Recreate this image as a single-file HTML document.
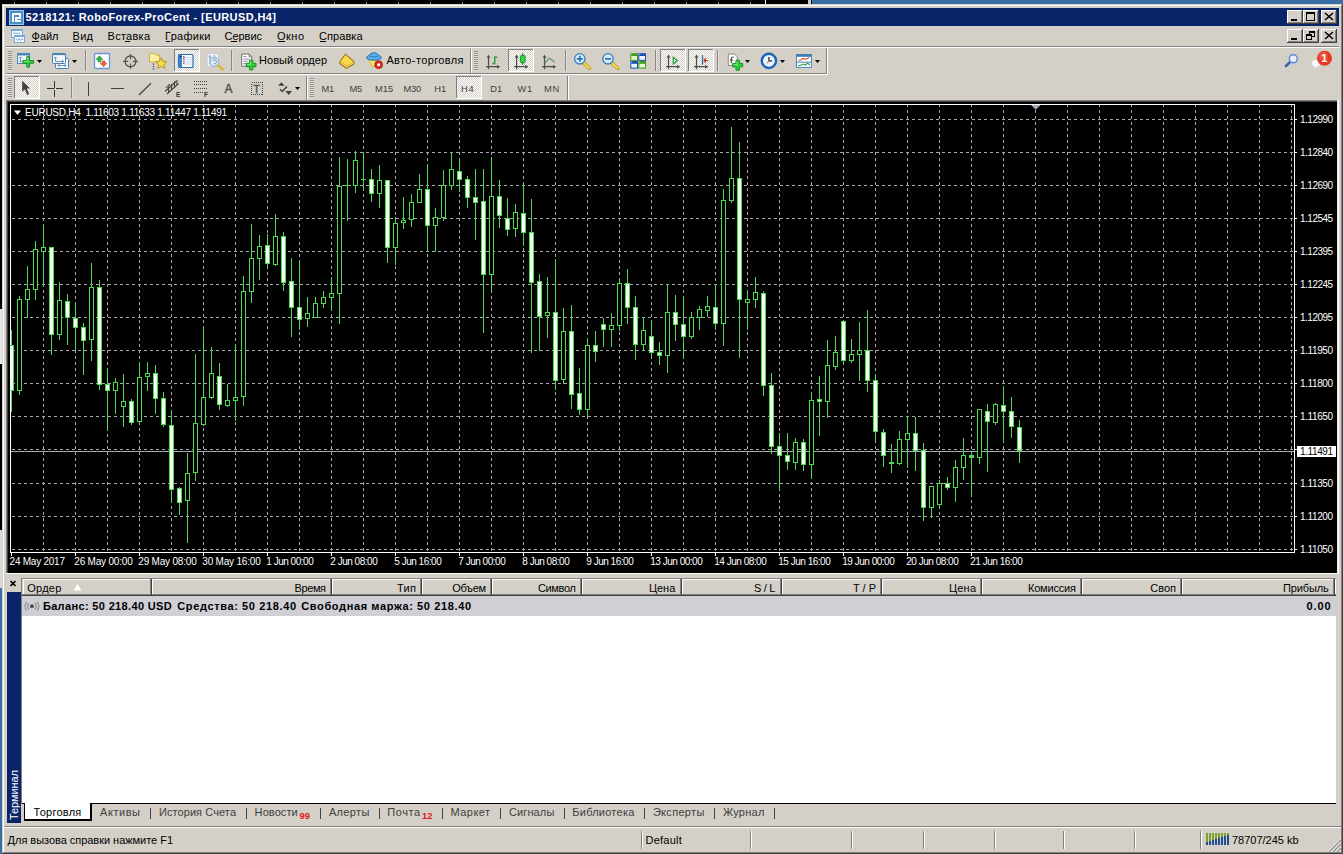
<!DOCTYPE html>
<html><head><meta charset="utf-8"><title>5218121: RoboForex-ProCent - [EURUSD,H4]</title>
<style>
html,body{margin:0;padding:0;background:#000;overflow:hidden}
svg{display:block;font-family:"Liberation Sans",sans-serif}
.c{shape-rendering:crispEdges}
</style></head><body>
<svg width="1343" height="854" viewBox="0 0 1343 854">
<defs>
<pattern id="chk" width="2" height="2" patternUnits="userSpaceOnUse"><rect width="2" height="2" fill="#ffffff"/><rect width="1" height="1" fill="#d4d0c8"/><rect x="1" y="1" width="1" height="1" fill="#d4d0c8"/></pattern>
</defs>
<g class="c">
<rect x="0" y="0" width="1343" height="854" fill="#000"/>
<rect x="812" y="0" width="531" height="4" fill="#3a6ea5"/>
<rect x="808" y="0" width="3" height="4" fill="#c8c8c8"/>
<rect x="14" y="2" width="1" height="2" fill="#8f8f8f"/>
<rect x="46" y="2" width="1" height="2" fill="#8f8f8f"/>
<rect x="78" y="2" width="1" height="2" fill="#8f8f8f"/>
<rect x="110" y="2" width="1" height="2" fill="#8f8f8f"/>
<rect x="142" y="2" width="1" height="2" fill="#8f8f8f"/>
<rect x="174" y="2" width="1" height="2" fill="#8f8f8f"/>
<rect x="206" y="2" width="1" height="2" fill="#8f8f8f"/>
<rect x="238" y="2" width="1" height="2" fill="#8f8f8f"/>
<rect x="270" y="2" width="1" height="2" fill="#8f8f8f"/>
<rect x="302" y="2" width="1" height="2" fill="#8f8f8f"/>
<rect x="334" y="2" width="1" height="2" fill="#8f8f8f"/>
<rect x="366" y="2" width="1" height="2" fill="#8f8f8f"/>
<rect x="398" y="2" width="1" height="2" fill="#8f8f8f"/>
<rect x="430" y="2" width="1" height="2" fill="#8f8f8f"/>
<rect x="462" y="2" width="1" height="2" fill="#8f8f8f"/>
<rect x="494" y="2" width="1" height="2" fill="#8f8f8f"/>
<rect x="526" y="2" width="1" height="2" fill="#8f8f8f"/>
<rect x="558" y="2" width="1" height="2" fill="#8f8f8f"/>
<rect x="590" y="2" width="1" height="2" fill="#8f8f8f"/>
<rect x="622" y="2" width="1" height="2" fill="#8f8f8f"/>
<rect x="654" y="2" width="1" height="2" fill="#8f8f8f"/>
<rect x="686" y="2" width="1" height="2" fill="#8f8f8f"/>
<rect x="718" y="2" width="1" height="2" fill="#8f8f8f"/>
<rect x="750" y="2" width="1" height="2" fill="#8f8f8f"/>
<rect x="765" y="0" width="1" height="4" fill="#fff"/>
<rect x="0" y="588" width="2" height="266" fill="#3a6ea5"/>
<rect x="0" y="309" width="2" height="55" fill="#e8e8e8"/>
<rect x="0" y="530" width="2" height="58" fill="#d8d8d8"/>
<rect x="2" y="4" width="1341" height="850" fill="#d4d0c8"/>
<rect x="2" y="5" width="1341" height="1" fill="#ffffff"/>
<rect x="3" y="5" width="1" height="848" fill="#ffffff"/>
<rect x="1341" y="5" width="1" height="848" fill="#808080"/>
<rect x="1342" y="4" width="1" height="850" fill="#404040"/>
<rect x="3" y="852" width="1339" height="1" fill="#808080"/>
<rect x="2" y="853" width="1341" height="1" fill="#404040"/>
<rect x="6" y="8" width="1333" height="18" fill="#0a246a"/>
</g>
<g class="c">
<rect x="9" y="10" width="15" height="15" fill="#9cc7e6"/>
<rect x="10" y="11" width="13" height="13" fill="#4d8fc4"/>
<rect x="12" y="13" width="9" height="2" fill="#fff"/>
<rect x="12" y="13" width="2" height="9" fill="#fff"/>
<rect x="19" y="13" width="2" height="5" fill="#fff"/>
<rect x="15" y="17" width="6" height="2" fill="#fff"/>
<rect x="15" y="20" width="6" height="2" fill="#fff"/>
<rect x="15" y="17" width="2" height="5" fill="#fff"/>
</g>
<text x="25.6" y="21" font-size="11" fill="#fff" font-weight="bold" textLength="250.4" lengthAdjust="spacing">5218121: RoboForex-ProCent - [EURUSD,H4]</text>
<g class="c">
<rect x="1287" y="10" width="16" height="14" fill="#d4d0c8"/>
<rect x="1287" y="10" width="15" height="1" fill="#ffffff"/>
<rect x="1287" y="10" width="1" height="13" fill="#ffffff"/>
<rect x="1287" y="23" width="16" height="1" fill="#404040"/>
<rect x="1302" y="10" width="1" height="14" fill="#404040"/>
<rect x="1288" y="22" width="14" height="1" fill="#808080"/>
<rect x="1301" y="11" width="1" height="12" fill="#808080"/>
<rect x="1287" y="29" width="16" height="14" fill="#d4d0c8"/>
<rect x="1287" y="29" width="15" height="1" fill="#ffffff"/>
<rect x="1287" y="29" width="1" height="13" fill="#ffffff"/>
<rect x="1287" y="42" width="16" height="1" fill="#404040"/>
<rect x="1302" y="29" width="1" height="14" fill="#404040"/>
<rect x="1288" y="41" width="14" height="1" fill="#808080"/>
<rect x="1301" y="30" width="1" height="12" fill="#808080"/>
<rect x="1303" y="10" width="16" height="14" fill="#d4d0c8"/>
<rect x="1303" y="10" width="15" height="1" fill="#ffffff"/>
<rect x="1303" y="10" width="1" height="13" fill="#ffffff"/>
<rect x="1303" y="23" width="16" height="1" fill="#404040"/>
<rect x="1318" y="10" width="1" height="14" fill="#404040"/>
<rect x="1304" y="22" width="14" height="1" fill="#808080"/>
<rect x="1317" y="11" width="1" height="12" fill="#808080"/>
<rect x="1303" y="29" width="16" height="14" fill="#d4d0c8"/>
<rect x="1303" y="29" width="15" height="1" fill="#ffffff"/>
<rect x="1303" y="29" width="1" height="13" fill="#ffffff"/>
<rect x="1303" y="42" width="16" height="1" fill="#404040"/>
<rect x="1318" y="29" width="1" height="14" fill="#404040"/>
<rect x="1304" y="41" width="14" height="1" fill="#808080"/>
<rect x="1317" y="30" width="1" height="12" fill="#808080"/>
<rect x="1321" y="10" width="16" height="14" fill="#d4d0c8"/>
<rect x="1321" y="10" width="15" height="1" fill="#ffffff"/>
<rect x="1321" y="10" width="1" height="13" fill="#ffffff"/>
<rect x="1321" y="23" width="16" height="1" fill="#404040"/>
<rect x="1336" y="10" width="1" height="14" fill="#404040"/>
<rect x="1322" y="22" width="14" height="1" fill="#808080"/>
<rect x="1335" y="11" width="1" height="12" fill="#808080"/>
<rect x="1321" y="29" width="16" height="14" fill="#d4d0c8"/>
<rect x="1321" y="29" width="15" height="1" fill="#ffffff"/>
<rect x="1321" y="29" width="1" height="13" fill="#ffffff"/>
<rect x="1321" y="42" width="16" height="1" fill="#404040"/>
<rect x="1336" y="29" width="1" height="14" fill="#404040"/>
<rect x="1322" y="41" width="14" height="1" fill="#808080"/>
<rect x="1335" y="30" width="1" height="12" fill="#808080"/>
<rect x="1291" y="19" width="6" height="2" fill="#000"/>
<rect x="1291" y="38" width="6" height="2" fill="#000"/>
<rect x="1306" y="12" width="9" height="9" fill="#000"/>
<rect x="1307" y="14" width="7" height="6" fill="#d4d0c8"/>
<rect x="1309" y="31" width="6" height="6" fill="#000"/>
<rect x="1310" y="33" width="4" height="3" fill="#d4d0c8"/>
<rect x="1306" y="34" width="6" height="6" fill="#000"/>
<rect x="1307" y="36" width="4" height="3" fill="#d4d0c8"/>
</g>
<path d="M1325 13l8 7M1333 13l-8 7" stroke="#000" stroke-width="1.6" fill="none"/>
<path d="M1325 32l8 7M1333 32l-8 7" stroke="#000" stroke-width="1.6" fill="none"/>
<g class="c">
<rect x="11" y="29" width="12" height="9" fill="#7aa7d6"/>
<rect x="12" y="31" width="10" height="6" fill="#f4f9fe"/>
<rect x="14" y="35" width="11" height="8" fill="#7aa7d6"/>
<rect x="15" y="37" width="9" height="5" fill="#f8fbff"/>
</g><path d="M13 34l1.500-1.500 1.500 1.500 1.500-1.500 1.500 1.500 1.500-1.500M16 38.500l1.500 2 1.500-2 1.500 2 1.500-2 1 1.500" stroke="#5b8fd0" stroke-width=".8" fill="none"/><g class="c">
<rect x="6" y="46" width="1333" height="1" fill="#808080"/>
<rect x="6" y="47" width="1333" height="1" fill="#ffffff"/>
</g>
<text x="31.6" y="40" font-size="11" fill="#000" textLength="26.9" lengthAdjust="spacing">Файл</text>
<text x="72.6" y="40" font-size="11" fill="#000" textLength="20.4" lengthAdjust="spacing">Вид</text>
<text x="107.6" y="40" font-size="11" fill="#000" textLength="42.4" lengthAdjust="spacing">Вставка</text>
<text x="165.1" y="40" font-size="11" fill="#000" textLength="45.4" lengthAdjust="spacing">Графики</text>
<text x="224.6" y="40" font-size="11" fill="#000" textLength="37.4" lengthAdjust="spacing">Сервис</text>
<text x="277.1" y="40" font-size="11" fill="#000" textLength="26.9" lengthAdjust="spacing">Окно</text>
<text x="319.1" y="40" font-size="11" fill="#000" textLength="43.4" lengthAdjust="spacing">Справка</text>
<g class="c">
<rect x="32" y="41" width="7" height="1" fill="#000"/>
<rect x="73" y="41" width="6" height="1" fill="#000"/>
<rect x="125" y="41" width="5" height="1" fill="#000"/>
<rect x="165.5" y="41" width="4.5" height="1" fill="#000"/>
<rect x="231" y="41" width="6" height="1" fill="#000"/>
<rect x="277.5" y="41" width="7.5" height="1" fill="#000"/>
<rect x="319.5" y="41" width="6.5" height="1" fill="#000"/>
</g>
<g class="c">
<rect x="6" y="73" width="822" height="1" fill="#808080"/>
<rect x="6" y="74" width="822" height="1" fill="#ffffff"/>
<rect x="826" y="48" width="1" height="26" fill="#808080"/>
<rect x="827" y="48" width="1" height="27" fill="#ffffff"/>
<rect x="306" y="76" width="1" height="24" fill="#808080"/>
<rect x="307" y="76" width="1" height="24" fill="#ffffff"/>
<rect x="567" y="76" width="1" height="24" fill="#808080"/>
<rect x="568" y="76" width="1" height="24" fill="#ffffff"/>
<rect x="470" y="49" width="1" height="24" fill="#808080"/>
<rect x="471" y="49" width="1" height="24" fill="#ffffff"/>
<rect x="8" y="51" width="4" height="1" fill="#908d86"/>
<rect x="8" y="52" width="4" height="1" fill="#e4e1da"/>
<rect x="8" y="53" width="4" height="1" fill="#908d86"/>
<rect x="8" y="54" width="4" height="1" fill="#e4e1da"/>
<rect x="8" y="55" width="4" height="1" fill="#908d86"/>
<rect x="8" y="56" width="4" height="1" fill="#e4e1da"/>
<rect x="8" y="57" width="4" height="1" fill="#908d86"/>
<rect x="8" y="58" width="4" height="1" fill="#e4e1da"/>
<rect x="8" y="59" width="4" height="1" fill="#908d86"/>
<rect x="8" y="60" width="4" height="1" fill="#e4e1da"/>
<rect x="8" y="61" width="4" height="1" fill="#908d86"/>
<rect x="8" y="62" width="4" height="1" fill="#e4e1da"/>
<rect x="8" y="63" width="4" height="1" fill="#908d86"/>
<rect x="8" y="64" width="4" height="1" fill="#e4e1da"/>
<rect x="8" y="65" width="4" height="1" fill="#908d86"/>
<rect x="8" y="66" width="4" height="1" fill="#e4e1da"/>
<rect x="8" y="67" width="4" height="1" fill="#908d86"/>
<rect x="8" y="68" width="4" height="1" fill="#e4e1da"/>
<rect x="8" y="69" width="4" height="1" fill="#908d86"/>
<rect x="8" y="70" width="4" height="1" fill="#e4e1da"/>
<rect x="474" y="51" width="4" height="1" fill="#908d86"/>
<rect x="474" y="52" width="4" height="1" fill="#e4e1da"/>
<rect x="474" y="53" width="4" height="1" fill="#908d86"/>
<rect x="474" y="54" width="4" height="1" fill="#e4e1da"/>
<rect x="474" y="55" width="4" height="1" fill="#908d86"/>
<rect x="474" y="56" width="4" height="1" fill="#e4e1da"/>
<rect x="474" y="57" width="4" height="1" fill="#908d86"/>
<rect x="474" y="58" width="4" height="1" fill="#e4e1da"/>
<rect x="474" y="59" width="4" height="1" fill="#908d86"/>
<rect x="474" y="60" width="4" height="1" fill="#e4e1da"/>
<rect x="474" y="61" width="4" height="1" fill="#908d86"/>
<rect x="474" y="62" width="4" height="1" fill="#e4e1da"/>
<rect x="474" y="63" width="4" height="1" fill="#908d86"/>
<rect x="474" y="64" width="4" height="1" fill="#e4e1da"/>
<rect x="474" y="65" width="4" height="1" fill="#908d86"/>
<rect x="474" y="66" width="4" height="1" fill="#e4e1da"/>
<rect x="474" y="67" width="4" height="1" fill="#908d86"/>
<rect x="474" y="68" width="4" height="1" fill="#e4e1da"/>
<rect x="474" y="69" width="4" height="1" fill="#908d86"/>
<rect x="474" y="70" width="4" height="1" fill="#e4e1da"/>
<rect x="8" y="78" width="4" height="1" fill="#908d86"/>
<rect x="8" y="79" width="4" height="1" fill="#e4e1da"/>
<rect x="8" y="80" width="4" height="1" fill="#908d86"/>
<rect x="8" y="81" width="4" height="1" fill="#e4e1da"/>
<rect x="8" y="82" width="4" height="1" fill="#908d86"/>
<rect x="8" y="83" width="4" height="1" fill="#e4e1da"/>
<rect x="8" y="84" width="4" height="1" fill="#908d86"/>
<rect x="8" y="85" width="4" height="1" fill="#e4e1da"/>
<rect x="8" y="86" width="4" height="1" fill="#908d86"/>
<rect x="8" y="87" width="4" height="1" fill="#e4e1da"/>
<rect x="8" y="88" width="4" height="1" fill="#908d86"/>
<rect x="8" y="89" width="4" height="1" fill="#e4e1da"/>
<rect x="8" y="90" width="4" height="1" fill="#908d86"/>
<rect x="8" y="91" width="4" height="1" fill="#e4e1da"/>
<rect x="8" y="92" width="4" height="1" fill="#908d86"/>
<rect x="8" y="93" width="4" height="1" fill="#e4e1da"/>
<rect x="8" y="94" width="4" height="1" fill="#908d86"/>
<rect x="8" y="95" width="4" height="1" fill="#e4e1da"/>
<rect x="8" y="96" width="4" height="1" fill="#908d86"/>
<rect x="8" y="97" width="4" height="1" fill="#e4e1da"/>
<rect x="310" y="78" width="4" height="1" fill="#908d86"/>
<rect x="310" y="79" width="4" height="1" fill="#e4e1da"/>
<rect x="310" y="80" width="4" height="1" fill="#908d86"/>
<rect x="310" y="81" width="4" height="1" fill="#e4e1da"/>
<rect x="310" y="82" width="4" height="1" fill="#908d86"/>
<rect x="310" y="83" width="4" height="1" fill="#e4e1da"/>
<rect x="310" y="84" width="4" height="1" fill="#908d86"/>
<rect x="310" y="85" width="4" height="1" fill="#e4e1da"/>
<rect x="310" y="86" width="4" height="1" fill="#908d86"/>
<rect x="310" y="87" width="4" height="1" fill="#e4e1da"/>
<rect x="310" y="88" width="4" height="1" fill="#908d86"/>
<rect x="310" y="89" width="4" height="1" fill="#e4e1da"/>
<rect x="310" y="90" width="4" height="1" fill="#908d86"/>
<rect x="310" y="91" width="4" height="1" fill="#e4e1da"/>
<rect x="310" y="92" width="4" height="1" fill="#908d86"/>
<rect x="310" y="93" width="4" height="1" fill="#e4e1da"/>
<rect x="310" y="94" width="4" height="1" fill="#908d86"/>
<rect x="310" y="95" width="4" height="1" fill="#e4e1da"/>
<rect x="310" y="96" width="4" height="1" fill="#908d86"/>
<rect x="310" y="97" width="4" height="1" fill="#e4e1da"/>
<rect x="85" y="50" width="1" height="21" fill="#8a8782"/>
<rect x="86" y="50" width="1" height="21" fill="#e2dfd8"/>
<rect x="231" y="50" width="1" height="21" fill="#8a8782"/>
<rect x="232" y="50" width="1" height="21" fill="#e2dfd8"/>
<rect x="565" y="50" width="1" height="21" fill="#8a8782"/>
<rect x="566" y="50" width="1" height="21" fill="#e2dfd8"/>
<rect x="655" y="50" width="1" height="21" fill="#8a8782"/>
<rect x="656" y="50" width="1" height="21" fill="#e2dfd8"/>
<rect x="717" y="50" width="1" height="21" fill="#8a8782"/>
<rect x="718" y="50" width="1" height="21" fill="#e2dfd8"/>
<rect x="71" y="77" width="1" height="21" fill="#8a8782"/>
<rect x="72" y="77" width="1" height="21" fill="#e2dfd8"/>
<rect x="174" y="49" width="26" height="23" fill="url(#chk)"/>
<rect x="174" y="49" width="26" height="1" fill="#808080"/>
<rect x="174" y="49" width="1" height="23" fill="#808080"/>
<rect x="174" y="71" width="26" height="1" fill="#ffffff"/>
<rect x="199" y="49" width="1" height="23" fill="#ffffff"/>
<rect x="508" y="49" width="26" height="23" fill="url(#chk)"/>
<rect x="508" y="49" width="26" height="1" fill="#808080"/>
<rect x="508" y="49" width="1" height="23" fill="#808080"/>
<rect x="508" y="71" width="26" height="1" fill="#ffffff"/>
<rect x="533" y="49" width="1" height="23" fill="#ffffff"/>
<rect x="660" y="49" width="26" height="23" fill="url(#chk)"/>
<rect x="660" y="49" width="26" height="1" fill="#808080"/>
<rect x="660" y="49" width="1" height="23" fill="#808080"/>
<rect x="660" y="71" width="26" height="1" fill="#ffffff"/>
<rect x="685" y="49" width="1" height="23" fill="#ffffff"/>
<rect x="688" y="49" width="26" height="23" fill="url(#chk)"/>
<rect x="688" y="49" width="26" height="1" fill="#808080"/>
<rect x="688" y="49" width="1" height="23" fill="#808080"/>
<rect x="688" y="71" width="26" height="1" fill="#ffffff"/>
<rect x="713" y="49" width="1" height="23" fill="#ffffff"/>
<rect x="14" y="76" width="26" height="23" fill="url(#chk)"/>
<rect x="14" y="76" width="26" height="1" fill="#808080"/>
<rect x="14" y="76" width="1" height="23" fill="#808080"/>
<rect x="14" y="98" width="26" height="1" fill="#ffffff"/>
<rect x="39" y="76" width="1" height="23" fill="#ffffff"/>
<rect x="456" y="76" width="26" height="23" fill="url(#chk)"/>
<rect x="456" y="76" width="26" height="1" fill="#808080"/>
<rect x="456" y="76" width="1" height="23" fill="#808080"/>
<rect x="456" y="98" width="26" height="1" fill="#ffffff"/>
<rect x="481" y="76" width="1" height="23" fill="#ffffff"/>
</g>
<path d="M37 60h5l-2.5 3z" fill="#000"/>
<path d="M72 60h5l-2.5 3z" fill="#000"/>
<path d="M745 60h5l-2.5 3z" fill="#000"/>
<path d="M780 60h5l-2.5 3z" fill="#000"/>
<path d="M815 60h5l-2.5 3z" fill="#000"/>
<path d="M295 87h5l-2.5 3z" fill="#000"/>
<text x="259.1" y="64" font-size="11" fill="#000" textLength="67.9" lengthAdjust="spacing">Новый ордер</text>
<text x="386.4" y="64" font-size="11" fill="#000" textLength="77.1" lengthAdjust="spacing">Авто-торговля</text>
<text x="321.4" y="92" font-size="9.3" fill="#404040" textLength="12.8" lengthAdjust="spacing">M1</text>
<text x="349.6" y="92" font-size="9.3" fill="#404040" textLength="12.6" lengthAdjust="spacing">M5</text>
<text x="375.1" y="92" font-size="9.3" fill="#404040" textLength="18.1" lengthAdjust="spacing">M15</text>
<text x="403.4" y="92" font-size="9.3" fill="#404040" textLength="17.8" lengthAdjust="spacing">M30</text>
<text x="434.2" y="92" font-size="9.3" fill="#404040" textLength="12.0" lengthAdjust="spacing">H1</text>
<text x="461.1" y="92" font-size="9.3" fill="#404040" textLength="12.6" lengthAdjust="spacing">H4</text>
<text x="490.2" y="92" font-size="9.3" fill="#404040" textLength="12.0" lengthAdjust="spacing">D1</text>
<text x="517.6" y="92" font-size="9.3" fill="#404040" textLength="14.6" lengthAdjust="spacing">W1</text>
<text x="544.1" y="92" font-size="9.3" fill="#404040" textLength="15.1" lengthAdjust="spacing">MN</text>
<rect x="17.5" y="53.5" width="12" height="10" fill="#f2f8fd" stroke="#4a86b8"/>
<rect x="17.5" y="53.5" width="12" height="2" fill="#4a86b8"/>
<path d="M20.5 57v5M18.8 58.5l1.7-1.8 1.7 1.8M18.8 60.5l1.7 1.8 1.7-1.8" stroke="#7d9db8" stroke-width="1" fill="none"/>
<path d="M26.849999999999998 56.6h2.7v3.9499999999999997h3.9499999999999997v2.7h-3.9499999999999997v3.9499999999999997h-2.7v-3.9499999999999997h-3.9499999999999997v-2.7h3.9499999999999997z" fill="#2fd13c" stroke="#178f22" stroke-width="1"/>
<path d="M27.849999999999998 57.6v3.9499999999999997h-3.9499999999999997" stroke="#8df09a" stroke-width="1" fill="none" opacity=".8"/>
<rect x="55.5" y="58.5" width="13" height="10" rx="1" fill="#f2f8fd" stroke="#4a7fb0"/>
<path d="M58 65.5h8M58 65.5l1.5-1.5M58 65.5l1.5 1.5M66 65.5l-1.5-1.5M66 65.5l-1.5 1.5" stroke="#6f93b3" stroke-width="1" fill="none"/>
<rect x="52.5" y="53.5" width="13" height="10" rx="1" fill="#f2f8fd" stroke="#4a7fb0"/>
<rect x="52.5" y="53.5" width="13" height="1.6" fill="#4a7fb0"/>
<path d="M55.5 57v4.5h8M54 58.5l1.5-1.6 1.5 1.6M62 60l1.6 1.5-1.6 1.5" stroke="#6f93b3" stroke-width="1" fill="none"/>
<rect x="94.5" y="53.5" width="15" height="15" rx="1.2" fill="#fcfdff" stroke="#6b95d6" stroke-width="1.3"/>
<path d="M99.4 55.8l3.4 3.6h-2v2.4h-2.8v-2.4h-2z" fill="#2bb53a" stroke="#1c8a28" stroke-width=".6"/>
<path d="M103.6 66.8l-3.4-3.6h2v-2.2h2.8v2.2h2z" fill="#f0643c" stroke="#c8431f" stroke-width=".6"/>
<circle cx="130.5" cy="61.4" r="5.4" fill="none" stroke="#555" stroke-width="1.3"/>
<path d="M130.5 54v5.3M130.5 63.5v5.2M123 61.4h5.3M132.7 61.4h5.2" stroke="#555" stroke-width="1.2"/>
<path d="M149.5 55l1.2-1.7h3.6l1.2 1.7h4v7h-10z" fill="#fbf0a0" stroke="#cbb044" stroke-width="1"/>
<path d="M153.5 63.5v6" stroke="#333" stroke-width="1.2" stroke-dasharray="1.2 1.2"/>
<path d="M161.3 57.6l1.7 3.6 3.9.5-2.9 2.7.8 3.9-3.5-1.9-3.5 1.9.8-3.9-2.9-2.7 3.9-.5z" fill="#f8dc45" stroke="#b5942a" stroke-width="1"/>
<rect x="178.5" y="54.5" width="14.5" height="13" rx="1" fill="#f7fbff" stroke="#2d6db3" stroke-width="1.2"/>
<rect x="179" y="55" width="3" height="12" fill="#3c86d0"/>
<path d="M184 57.5h8M184 59.7h8M184 61.9h8M184 64.1h8" stroke="#b8cff0" stroke-width=".8"/>
<rect x="180" y="56" width="1.4" height="1.4" fill="#0a1a4a"/><rect x="183.2" y="56" width="1.2" height="1.2" fill="#222"/><rect x="183.2" y="58.2" width="1.2" height="1.2" fill="#222"/><rect x="183.2" y="60.4" width="1.2" height="1.2" fill="#a02020"/><rect x="183.2" y="62.6" width="1.2" height="1.2" fill="#a02020"/>
<rect x="207.2" y="53.8" width="11" height="12.3" fill="#f4f8fc" stroke="#c2ccd6" stroke-width=".8"/>
<path d="M210 55v9M208.5 57h3M214.5 55v6M213 58h3.5" stroke="#7f9fbd" stroke-width="1"/>
<path d="M217.5 65l5.2 4.3" stroke="#d9b92e" stroke-width="2.6" stroke-linecap="round"/>
<circle cx="214.3" cy="62" r="4.3" fill="#dcebf7" fill-opacity=".85" stroke="#8fb0cf" stroke-width="1.2"/>
<path d="M212.7 61a2 2 0 1 1 1.2 2.8" stroke="#6f96bd" stroke-width="1" fill="none"/>
<path d="M241.7 54h7.3l2.8 2.8v9.4h-10.1z" fill="#fbfbfb" stroke="#6d6d6d" stroke-width="1"/>
<path d="M249 54v2.8h2.8" fill="none" stroke="#6d6d6d" stroke-width=".8"/>
<path d="M243.5 56.5h3M243.5 59h6M243.5 61.3h4M243.5 63.6h3" stroke="#8a8a9a" stroke-width="1.1"/>
<path d="M249.54999999999998 60.2h3.3v3.15h3.15v3.3h-3.15v3.15h-3.3v-3.15h-3.15v-3.3h3.15z" fill="#2fd13c" stroke="#178f22" stroke-width="1"/>
<path d="M250.54999999999998 61.2v3.15h-3.15" stroke="#8df09a" stroke-width="1" fill="none" opacity=".8"/>
<path d="M345.4 54l9 7.900-.9 2.500-7 4-7-5 .6-2z" fill="#d9a31e" stroke="#94690f" stroke-width="1"/>
<path d="M345.500 55l7.700 6.900-6.500 3.600-5.800-4.100z" fill="#f8da48"/>
<path d="M340.300 62.300l6.300 4.500 7-4" stroke="#fbe98c" stroke-width=".9" fill="none"/>
<path d="M368.200 59.200l4.600 8.400 3.800-4 1-4.400z" fill="#f7e463" stroke="#c9ae38" stroke-width=".8"/>
<path d="M366.600 57.800c0-1.300 1.300-2.100 3-2.500.3-1.500 1.900-2.500 4.300-2.500s4 1 4.300 2.500c1.700.4 3 1.200 3 2.500 0 1.500-3.200 2.400-7.300 2.400s-7.300-.9-7.300-2.400z" fill="#58aff0" stroke="#236fa9" stroke-width="1"/>
<path d="M369.800 56.200c1.200.7 6.900.7 8.200 0" stroke="#236fa9" stroke-width=".8" fill="none"/>
<circle cx="378.600" cy="64.700" r="3.900" fill="#d92b20" stroke="#a81410" stroke-width=".8"/>
<rect x="377.300" y="63.400" width="2.700" height="2.700" fill="#fff"/>
<path d="M488.5 69.2V55.7M486.0 66.7H499.5" stroke="#4c4c4c" stroke-width="1.2" fill="none"/>
<path d="M486.5 57.7l2-3 2 3zM497.0 64.7l3 2-3 2z" fill="#4c4c4c"/>
<path d="M494.7 56.2v8.4M494.7 57.3h2.600M494.700 63.400h-2.400" stroke="#2f9e3f" stroke-width="1.5" fill="none"/>
<path d="M516.6 69.2V55.7M514.1 66.7H527.6" stroke="#4c4c4c" stroke-width="1.2" fill="none"/>
<path d="M514.6 57.7l2-3 2 3zM525.1 64.7l3 2-3 2z" fill="#4c4c4c"/>
<path d="M522.7 53.2v11.500" stroke="#1d8a2a" stroke-width="1.300"/>
<rect x="520.4" y="55.600" width="4.700" height="7" rx=".8" fill="#35d948" stroke="#1d8a2a" stroke-width="1"/>
<path d="M544.5 69.2V55.7M542.0 66.7H555.5" stroke="#4c4c4c" stroke-width="1.2" fill="none"/>
<path d="M542.5 57.7l2-3 2 3zM553.0 64.7l3 2-3 2z" fill="#4c4c4c"/>
<path d="M544.800 63.200l4.400-5 5.600 3.900" stroke="#6f9a78" stroke-width="1.300" fill="none"/>
<path d="M583.5999999999999 62.800l6 5.500" stroke="#b8951f" stroke-width="3.400" stroke-linecap="round"/>
<path d="M583.8 63l5.600 5.100" stroke="#f6dc3c" stroke-width="2" stroke-linecap="round"/>
<circle cx="579.8" cy="58.800" r="5.200" fill="#d5ecfb" stroke="#3b7cbd" stroke-width="1.300"/>
<path d="M576.8 58.800h6M579.8 55.800v6" stroke="#2e6fb0" stroke-width="1.700"/>
<path d="M611.8 62.800l6 5.500" stroke="#b8951f" stroke-width="3.400" stroke-linecap="round"/>
<path d="M612 63l5.600 5.100" stroke="#f6dc3c" stroke-width="2" stroke-linecap="round"/>
<circle cx="608" cy="58.800" r="5.200" fill="#d5ecfb" stroke="#3b7cbd" stroke-width="1.300"/>
<path d="M605 58.800h6" stroke="#2e6fb0" stroke-width="1.700"/>
<rect x="630.3" y="53.2" width="7.700" height="7.600" fill="#3f9a1e"/>
<rect x="631.3" y="56.0" width="5.700" height="3.800" fill="#e7f6c8"/>
<rect x="631.0999999999999" y="54.0" width="1" height="1" fill="#fff" opacity=".8"/>
<rect x="638.3" y="53.2" width="7.700" height="7.600" fill="#1f4fb0"/>
<rect x="639.3" y="56.0" width="5.700" height="3.800" fill="#eef3ff"/>
<rect x="639.0999999999999" y="54.0" width="1" height="1" fill="#fff" opacity=".8"/>
<rect x="630.3" y="61" width="7.700" height="7.600" fill="#1f4fb0"/>
<rect x="631.3" y="63.8" width="5.700" height="3.800" fill="#eef3ff"/>
<rect x="631.0999999999999" y="61.8" width="1" height="1" fill="#fff" opacity=".8"/>
<rect x="638.3" y="61" width="7.700" height="7.600" fill="#3f9a1e"/>
<rect x="639.3" y="63.8" width="5.700" height="3.800" fill="#e7f6c8"/>
<rect x="639.0999999999999" y="61.8" width="1" height="1" fill="#fff" opacity=".8"/>
<path d="M668.5 69.2V55.7M666.0 66.7H679.5" stroke="#4c4c4c" stroke-width="1.2" fill="none"/>
<path d="M666.5 57.7l2-3 2 3zM677.0 64.7l3 2-3 2z" fill="#4c4c4c"/>
<path d="M673.300 57.300v6.500l4-3.250z" fill="none" stroke="#2e9e3e" stroke-width="1.300"/>
<path d="M696.5 69.2V55.7M694.0 66.7H707.5" stroke="#4c4c4c" stroke-width="1.2" fill="none"/>
<path d="M694.5 57.7l2-3 2 3zM705.0 64.7l3 2-3 2z" fill="#4c4c4c"/>
<path d="M702.500 55.200v9.500" stroke="#2f6f9f" stroke-width="1.300"/>
<path d="M703.800 60.500h4M703.800 60.500l2.200-2.200M703.800 60.500l2.200 2.200" stroke="#b83a1a" stroke-width="1.200" fill="none"/>
<path d="M728.300 54h6.200l2.800 2.800v8.700h-9z" fill="#fbfbfb" stroke="#8a8a8a" stroke-width="1"/>
<path d="M733.500 57.200c-1.500-.3-2.200.3-2.200 1.600v4.500M730 60h3" stroke="#444" stroke-width="1.100" fill="none"/>
<path d="M736.0500000000001 60.2h3.3v3.35h3.35v3.3h-3.35v3.35h-3.3v-3.35h-3.35v-3.3h3.35z" fill="#2fd13c" stroke="#178f22" stroke-width="1"/>
<path d="M737.0500000000001 61.2v3.35h-3.35" stroke="#8df09a" stroke-width="1" fill="none" opacity=".8"/>
<circle cx="768.900" cy="60.800" r="7" fill="#eaf4ff" stroke="#1d6bc4" stroke-width="2.200"/>
<circle cx="768.900" cy="60.800" r="7.900" fill="none" stroke="#0f4a94" stroke-width=".6"/>
<path d="M768.900 60.800v-3.800M768.900 60.800h3.200" stroke="#222" stroke-width="1.200"/>
<path d="M768.900 60.800l-1.800 2.600" stroke="#c0392b" stroke-width=".9"/>
<rect x="796.400" y="54.600" width="15" height="12.800" fill="#fdfeff" stroke="#4a86b8" stroke-width="1"/>
<rect x="796" y="54.200" width="15.800" height="2.600" fill="#3d7db3"/>
<path d="M796.500 62.200h15" stroke="#4a86b8" stroke-width="1"/>
<path d="M798.300 60.300l2.500-.3 2.200-1.600 2.800.8 3.600-1.600" stroke="#c0452a" stroke-width="1.100" fill="none"/>
<path d="M798.300 65.600l2.500-.3 2.200-1.300 2.400 1 2.200-1.900 2 1.900" stroke="#2f9e4f" stroke-width="1.100" fill="none"/>
<path d="M1286 66l4.200-4.200" stroke="#3a63b8" stroke-width="2.600" stroke-linecap="round"/>
<circle cx="1293.300" cy="58.800" r="4" fill="#e8f1fb" stroke="#5b8bd0" stroke-width="1.500"/>
<path d="M1311.500 63.500a4.500 3.800 0 1 1 6 3.300l-3.800 2.800.6-2.600a4.500 3.800 0 0 1-2.800-3.500z" fill="#fafafa" stroke="#c6c9cf" stroke-width=".8"/>
<circle cx="1324.500" cy="58.200" r="7.500" fill="#e53a24"/>
<circle cx="1323.500" cy="56.500" r="4.500" fill="#f2644a" opacity=".55"/>
<text x="1321.3" y="62.3" font-size="11" fill="#fff" font-weight="bold">1</text>
<path d="M22.200 80.800v11l2.700-2.500 2.300 5.600 1.900-.8-2.300-5.500h3.300z" fill="#404040"/>
<g class="c">
<rect x="47" y="88" width="7" height="1" fill="#333"/>
<rect x="56" y="88" width="7" height="1" fill="#333"/>
<rect x="54" y="81" width="1" height="7" fill="#333"/>
<rect x="54" y="90" width="1" height="7" fill="#333"/>
<rect x="54" y="88" width="1" height="1" fill="#777"/>
<rect x="88" y="82" width="1" height="14" fill="#404040"/>
<rect x="111" y="88" width="13" height="1" fill="#404040"/>
</g>
<path d="M139 95l12-11.800" stroke="#404040" stroke-width="1.200"/>
<path d="M165 91.500l11.500-10.500M167 94l11.500-10.500M166 87.800l4-3.600" stroke="#404040" stroke-width="1.100" fill="none"/>
<path d="M168.500 86.500v6M171.500 84v6M174.500 81.500v6M177 80v5" stroke="#404040" stroke-width="1"/>
<text x="176" y="96.8" font-size="6.5" fill="#333" font-weight="bold">E</text>
<path d="M194 81.500h13M194 84.500h13M194 88.500h13M194 92.500h9" stroke="#404040" stroke-width="1" stroke-dasharray="1 1" class="c"/>
<text x="204" y="96.8" font-size="6.5" fill="#333" font-weight="bold">F</text>
<text x="224.4" y="92.7" font-size="12" fill="#505050" textLength="9.0" lengthAdjust="spacing" stroke="#505050" stroke-width=".4">A</text>
<rect x="251.500" y="82.500" width="11" height="12" fill="none" stroke="#404040" stroke-width="1" stroke-dasharray="1 1" class="c"/>
<text x="253.3" y="92.7" font-size="11" fill="#505050" stroke="#505050" stroke-width=".4">T</text>
<path d="M281.400 82.200l3.300 3.600h-6.600zM288.700 95l3.300-4h-6.600z" fill="#404040"/>
<path d="M280 89.300l2.300 2.200 4.700-5" stroke="#404040" stroke-width="1.500" fill="none"/>
<g class="c">
<rect x="6" y="100" width="1333" height="473" fill="#000"/>
<rect x="6" y="100" width="1333" height="1" fill="#808080"/>
<rect x="6" y="100" width="1" height="473" fill="#808080"/>
<rect x="7" y="101" width="1331" height="1" fill="#404040"/>
<rect x="7" y="101" width="1" height="472" fill="#404040"/>
<rect x="1337" y="100" width="1" height="473" fill="#ebe9e4"/>
<rect x="1338" y="100" width="1" height="474" fill="#ffffff"/>
<rect x="6" y="573" width="1333" height="1" fill="#ffffff"/>
<g stroke="#a6a8ab" stroke-width="1" stroke-dasharray="3 3" fill="none">
<path d="M12 119.5H1294"/>
<path d="M12 152.5H1294"/>
<path d="M12 185.5H1294"/>
<path d="M12 218.5H1294"/>
<path d="M12 251.5H1294"/>
<path d="M12 284.5H1294"/>
<path d="M12 317.5H1294"/>
<path d="M12 350.5H1294"/>
<path d="M12 383.5H1294"/>
<path d="M12 416.5H1294"/>
<path d="M12 449.5H1294"/>
<path d="M12 483.5H1294"/>
<path d="M12 516.5H1294"/>
<path d="M12 549.5H1294"/>
<path d="M43.5 104V552"/>
<path d="M75.5 104V552"/>
<path d="M107.5 104V552"/>
<path d="M139.5 104V552"/>
<path d="M171.5 104V552"/>
<path d="M203.5 104V552"/>
<path d="M235.5 104V552"/>
<path d="M267.5 104V552"/>
<path d="M299.5 104V552"/>
<path d="M331.5 104V552"/>
<path d="M363.5 104V552"/>
<path d="M395.5 104V552"/>
<path d="M427.5 104V552"/>
<path d="M459.5 104V552"/>
<path d="M491.5 104V552"/>
<path d="M523.5 104V552"/>
<path d="M555.5 104V552"/>
<path d="M587.5 104V552"/>
<path d="M619.5 104V552"/>
<path d="M651.5 104V552"/>
<path d="M683.5 104V552"/>
<path d="M715.5 104V552"/>
<path d="M747.5 104V552"/>
<path d="M779.5 104V552"/>
<path d="M811.5 104V552"/>
<path d="M843.5 104V552"/>
<path d="M875.5 104V552"/>
<path d="M907.5 104V552"/>
<path d="M939.5 104V552"/>
<path d="M971.5 104V552"/>
<path d="M1003.5 104V552"/>
<path d="M1035.5 104V552"/>
<path d="M1067.5 104V552"/>
<path d="M1099.5 104V552"/>
<path d="M1131.5 104V552"/>
<path d="M1163.5 104V552"/>
<path d="M1195.5 104V552"/>
<path d="M1227.5 104V552"/>
<path d="M1259.5 104V552"/>
<path d="M1291.5 104V552"/>
</g>
<rect x="11" y="451" width="1283" height="1" fill="#a3acb6"/>
<rect x="11" y="330" width="1" height="82" fill="#50d855"/>
<rect x="9" y="345" width="5" height="46" fill="#50d855"/>
<rect x="10" y="346" width="3" height="44" fill="#f2fff2"/>
<rect x="19" y="296" width="1" height="99" fill="#50d855"/>
<rect x="17" y="299" width="5" height="92" fill="#50d855"/>
<rect x="18" y="300" width="3" height="90" fill="#000"/>
<rect x="27" y="266" width="1" height="52" fill="#50d855"/>
<rect x="25" y="289" width="5" height="11" fill="#50d855"/>
<rect x="26" y="290" width="3" height="9" fill="#000"/>
<rect x="35" y="241" width="1" height="59" fill="#50d855"/>
<rect x="33" y="249" width="5" height="41" fill="#50d855"/>
<rect x="34" y="250" width="3" height="39" fill="#000"/>
<rect x="43" y="224" width="1" height="63" fill="#50d855"/>
<rect x="41" y="247" width="5" height="5" fill="#50d855"/>
<rect x="42" y="248" width="3" height="3" fill="#000"/>
<rect x="51" y="247" width="1" height="108" fill="#50d855"/>
<rect x="49" y="247" width="5" height="88" fill="#50d855"/>
<rect x="50" y="248" width="3" height="86" fill="#f2fff2"/>
<rect x="59" y="282" width="1" height="58" fill="#50d855"/>
<rect x="57" y="300" width="5" height="35" fill="#50d855"/>
<rect x="58" y="301" width="3" height="33" fill="#000"/>
<rect x="67" y="294" width="1" height="51" fill="#50d855"/>
<rect x="65" y="301" width="5" height="17" fill="#50d855"/>
<rect x="66" y="302" width="3" height="15" fill="#f2fff2"/>
<rect x="75" y="302" width="1" height="48" fill="#50d855"/>
<rect x="73" y="318" width="5" height="10" fill="#50d855"/>
<rect x="74" y="319" width="3" height="8" fill="#f2fff2"/>
<rect x="83" y="323" width="1" height="52" fill="#50d855"/>
<rect x="81" y="327" width="5" height="14" fill="#50d855"/>
<rect x="82" y="328" width="3" height="12" fill="#f2fff2"/>
<rect x="91" y="263" width="1" height="98" fill="#50d855"/>
<rect x="89" y="287" width="5" height="53" fill="#50d855"/>
<rect x="90" y="288" width="3" height="51" fill="#000"/>
<rect x="99" y="280" width="1" height="110" fill="#50d855"/>
<rect x="97" y="287" width="5" height="98" fill="#50d855"/>
<rect x="98" y="288" width="3" height="96" fill="#f2fff2"/>
<rect x="107" y="368" width="1" height="63" fill="#50d855"/>
<rect x="105" y="384" width="5" height="7" fill="#50d855"/>
<rect x="106" y="385" width="3" height="5" fill="#f2fff2"/>
<rect x="115" y="378" width="1" height="36" fill="#50d855"/>
<rect x="113" y="382" width="5" height="9" fill="#50d855"/>
<rect x="114" y="383" width="3" height="7" fill="#000"/>
<rect x="123" y="374" width="1" height="53" fill="#50d855"/>
<rect x="121" y="401" width="5" height="6" fill="#50d855"/>
<rect x="122" y="402" width="3" height="4" fill="#000"/>
<rect x="131" y="399" width="1" height="26" fill="#50d855"/>
<rect x="129" y="401" width="5" height="22" fill="#50d855"/>
<rect x="130" y="402" width="3" height="20" fill="#f2fff2"/>
<rect x="139" y="362" width="1" height="61" fill="#50d855"/>
<rect x="137" y="377" width="5" height="45" fill="#50d855"/>
<rect x="138" y="378" width="3" height="43" fill="#000"/>
<rect x="147" y="362" width="1" height="29" fill="#50d855"/>
<rect x="145" y="373" width="5" height="4" fill="#50d855"/>
<rect x="146" y="374" width="3" height="2" fill="#000"/>
<rect x="155" y="365" width="1" height="49" fill="#50d855"/>
<rect x="153" y="373" width="5" height="26" fill="#50d855"/>
<rect x="154" y="374" width="3" height="24" fill="#f2fff2"/>
<rect x="163" y="392" width="1" height="35" fill="#50d855"/>
<rect x="161" y="398" width="5" height="27" fill="#50d855"/>
<rect x="162" y="399" width="3" height="25" fill="#f2fff2"/>
<rect x="171" y="410" width="1" height="93" fill="#50d855"/>
<rect x="169" y="425" width="5" height="65" fill="#50d855"/>
<rect x="170" y="426" width="3" height="63" fill="#f2fff2"/>
<rect x="179" y="487" width="1" height="28" fill="#50d855"/>
<rect x="177" y="488" width="5" height="15" fill="#50d855"/>
<rect x="178" y="489" width="3" height="13" fill="#f2fff2"/>
<rect x="187" y="453" width="1" height="90" fill="#50d855"/>
<rect x="185" y="473" width="5" height="28" fill="#50d855"/>
<rect x="186" y="474" width="3" height="26" fill="#000"/>
<rect x="195" y="354" width="1" height="127" fill="#50d855"/>
<rect x="193" y="423" width="5" height="50" fill="#50d855"/>
<rect x="194" y="424" width="3" height="48" fill="#000"/>
<rect x="203" y="326" width="1" height="100" fill="#50d855"/>
<rect x="201" y="397" width="5" height="28" fill="#50d855"/>
<rect x="202" y="398" width="3" height="26" fill="#000"/>
<rect x="211" y="347" width="1" height="52" fill="#50d855"/>
<rect x="209" y="373" width="5" height="25" fill="#50d855"/>
<rect x="210" y="374" width="3" height="23" fill="#000"/>
<rect x="219" y="363" width="1" height="47" fill="#50d855"/>
<rect x="217" y="376" width="5" height="29" fill="#50d855"/>
<rect x="218" y="377" width="3" height="27" fill="#f2fff2"/>
<rect x="227" y="384" width="1" height="23" fill="#50d855"/>
<rect x="225" y="400" width="5" height="6" fill="#50d855"/>
<rect x="226" y="401" width="3" height="4" fill="#000"/>
<rect x="235" y="344" width="1" height="77" fill="#50d855"/>
<rect x="233" y="397" width="5" height="4" fill="#50d855"/>
<rect x="234" y="398" width="3" height="2" fill="#000"/>
<rect x="243" y="276" width="1" height="130" fill="#50d855"/>
<rect x="241" y="291" width="5" height="106" fill="#50d855"/>
<rect x="242" y="292" width="3" height="104" fill="#000"/>
<rect x="251" y="224" width="1" height="79" fill="#50d855"/>
<rect x="249" y="258" width="5" height="34" fill="#50d855"/>
<rect x="250" y="259" width="3" height="32" fill="#000"/>
<rect x="259" y="235" width="1" height="45" fill="#50d855"/>
<rect x="257" y="246" width="5" height="13" fill="#50d855"/>
<rect x="258" y="247" width="3" height="11" fill="#000"/>
<rect x="267" y="234" width="1" height="34" fill="#50d855"/>
<rect x="265" y="245" width="5" height="19" fill="#50d855"/>
<rect x="266" y="246" width="3" height="17" fill="#f2fff2"/>
<rect x="275" y="214" width="1" height="52" fill="#50d855"/>
<rect x="273" y="236" width="5" height="29" fill="#50d855"/>
<rect x="274" y="237" width="3" height="27" fill="#000"/>
<rect x="283" y="232" width="1" height="59" fill="#50d855"/>
<rect x="281" y="236" width="5" height="47" fill="#50d855"/>
<rect x="282" y="237" width="3" height="45" fill="#f2fff2"/>
<rect x="291" y="258" width="1" height="79" fill="#50d855"/>
<rect x="289" y="281" width="5" height="27" fill="#50d855"/>
<rect x="290" y="282" width="3" height="25" fill="#f2fff2"/>
<rect x="299" y="260" width="1" height="70" fill="#50d855"/>
<rect x="297" y="307" width="5" height="13" fill="#50d855"/>
<rect x="298" y="308" width="3" height="11" fill="#f2fff2"/>
<rect x="307" y="297" width="1" height="30" fill="#50d855"/>
<rect x="305" y="313" width="5" height="6" fill="#50d855"/>
<rect x="306" y="314" width="3" height="4" fill="#000"/>
<rect x="315" y="297" width="1" height="21" fill="#50d855"/>
<rect x="313" y="303" width="5" height="15" fill="#50d855"/>
<rect x="314" y="304" width="3" height="13" fill="#000"/>
<rect x="323" y="291" width="1" height="17" fill="#50d855"/>
<rect x="321" y="297" width="5" height="7" fill="#50d855"/>
<rect x="322" y="298" width="3" height="5" fill="#000"/>
<rect x="331" y="277" width="1" height="34" fill="#50d855"/>
<rect x="329" y="293" width="5" height="5" fill="#50d855"/>
<rect x="330" y="294" width="3" height="3" fill="#000"/>
<rect x="339" y="157" width="1" height="167" fill="#50d855"/>
<rect x="337" y="186" width="5" height="108" fill="#50d855"/>
<rect x="338" y="187" width="3" height="106" fill="#000"/>
<rect x="347" y="159" width="1" height="62" fill="#50d855"/>
<rect x="345" y="185" width="5" height="1" fill="#50d855"/>
<rect x="355" y="151" width="1" height="42" fill="#50d855"/>
<rect x="353" y="160" width="5" height="26" fill="#50d855"/>
<rect x="354" y="161" width="3" height="24" fill="#000"/>
<rect x="363" y="152" width="1" height="38" fill="#50d855"/>
<rect x="361" y="179" width="5" height="1" fill="#50d855"/>
<rect x="371" y="169" width="1" height="33" fill="#50d855"/>
<rect x="369" y="179" width="5" height="15" fill="#50d855"/>
<rect x="370" y="180" width="3" height="13" fill="#f2fff2"/>
<rect x="379" y="165" width="1" height="43" fill="#50d855"/>
<rect x="377" y="180" width="5" height="14" fill="#50d855"/>
<rect x="378" y="181" width="3" height="12" fill="#000"/>
<rect x="387" y="180" width="1" height="83" fill="#50d855"/>
<rect x="385" y="180" width="5" height="68" fill="#50d855"/>
<rect x="386" y="181" width="3" height="66" fill="#f2fff2"/>
<rect x="395" y="217" width="1" height="48" fill="#50d855"/>
<rect x="393" y="223" width="5" height="25" fill="#50d855"/>
<rect x="394" y="224" width="3" height="23" fill="#000"/>
<rect x="403" y="197" width="1" height="32" fill="#50d855"/>
<rect x="401" y="220" width="5" height="3" fill="#50d855"/>
<rect x="402" y="221" width="3" height="1" fill="#000"/>
<rect x="411" y="194" width="1" height="33" fill="#50d855"/>
<rect x="409" y="202" width="5" height="18" fill="#50d855"/>
<rect x="410" y="203" width="3" height="16" fill="#000"/>
<rect x="419" y="174" width="1" height="29" fill="#50d855"/>
<rect x="417" y="189" width="5" height="14" fill="#50d855"/>
<rect x="418" y="190" width="3" height="12" fill="#000"/>
<rect x="427" y="164" width="1" height="88" fill="#50d855"/>
<rect x="425" y="189" width="5" height="37" fill="#50d855"/>
<rect x="426" y="190" width="3" height="35" fill="#f2fff2"/>
<rect x="435" y="208" width="1" height="44" fill="#50d855"/>
<rect x="433" y="217" width="5" height="9" fill="#50d855"/>
<rect x="434" y="218" width="3" height="7" fill="#000"/>
<rect x="443" y="170" width="1" height="51" fill="#50d855"/>
<rect x="441" y="185" width="5" height="33" fill="#50d855"/>
<rect x="442" y="186" width="3" height="31" fill="#000"/>
<rect x="451" y="152" width="1" height="38" fill="#50d855"/>
<rect x="449" y="169" width="5" height="17" fill="#50d855"/>
<rect x="450" y="170" width="3" height="15" fill="#000"/>
<rect x="459" y="158" width="1" height="34" fill="#50d855"/>
<rect x="457" y="171" width="5" height="9" fill="#50d855"/>
<rect x="458" y="172" width="3" height="7" fill="#f2fff2"/>
<rect x="467" y="176" width="1" height="32" fill="#50d855"/>
<rect x="465" y="179" width="5" height="19" fill="#50d855"/>
<rect x="466" y="180" width="3" height="17" fill="#f2fff2"/>
<rect x="475" y="169" width="1" height="71" fill="#50d855"/>
<rect x="473" y="197" width="5" height="6" fill="#50d855"/>
<rect x="474" y="198" width="3" height="4" fill="#f2fff2"/>
<rect x="483" y="169" width="1" height="164" fill="#50d855"/>
<rect x="481" y="201" width="5" height="74" fill="#50d855"/>
<rect x="482" y="202" width="3" height="72" fill="#f2fff2"/>
<rect x="491" y="157" width="1" height="136" fill="#50d855"/>
<rect x="489" y="196" width="5" height="79" fill="#50d855"/>
<rect x="490" y="197" width="3" height="77" fill="#000"/>
<rect x="499" y="180" width="1" height="48" fill="#50d855"/>
<rect x="497" y="196" width="5" height="20" fill="#50d855"/>
<rect x="498" y="197" width="3" height="18" fill="#f2fff2"/>
<rect x="507" y="198" width="1" height="38" fill="#50d855"/>
<rect x="505" y="218" width="5" height="12" fill="#50d855"/>
<rect x="506" y="219" width="3" height="10" fill="#f2fff2"/>
<rect x="515" y="204" width="1" height="33" fill="#50d855"/>
<rect x="513" y="212" width="5" height="17" fill="#50d855"/>
<rect x="514" y="213" width="3" height="15" fill="#000"/>
<rect x="523" y="182" width="1" height="64" fill="#50d855"/>
<rect x="521" y="213" width="5" height="20" fill="#50d855"/>
<rect x="522" y="214" width="3" height="18" fill="#f2fff2"/>
<rect x="531" y="199" width="1" height="154" fill="#50d855"/>
<rect x="529" y="232" width="5" height="51" fill="#50d855"/>
<rect x="530" y="233" width="3" height="49" fill="#f2fff2"/>
<rect x="539" y="274" width="1" height="77" fill="#50d855"/>
<rect x="537" y="281" width="5" height="36" fill="#50d855"/>
<rect x="538" y="282" width="3" height="34" fill="#f2fff2"/>
<rect x="547" y="277" width="1" height="61" fill="#50d855"/>
<rect x="545" y="312" width="5" height="4" fill="#50d855"/>
<rect x="546" y="313" width="3" height="2" fill="#000"/>
<rect x="555" y="259" width="1" height="131" fill="#50d855"/>
<rect x="553" y="312" width="5" height="69" fill="#50d855"/>
<rect x="554" y="313" width="3" height="67" fill="#f2fff2"/>
<rect x="563" y="308" width="1" height="76" fill="#50d855"/>
<rect x="561" y="331" width="5" height="49" fill="#50d855"/>
<rect x="562" y="332" width="3" height="47" fill="#000"/>
<rect x="571" y="305" width="1" height="104" fill="#50d855"/>
<rect x="569" y="331" width="5" height="64" fill="#50d855"/>
<rect x="570" y="332" width="3" height="62" fill="#f2fff2"/>
<rect x="579" y="368" width="1" height="47" fill="#50d855"/>
<rect x="577" y="393" width="5" height="17" fill="#50d855"/>
<rect x="578" y="394" width="3" height="15" fill="#f2fff2"/>
<rect x="587" y="338" width="1" height="78" fill="#50d855"/>
<rect x="585" y="345" width="5" height="65" fill="#50d855"/>
<rect x="586" y="346" width="3" height="63" fill="#000"/>
<rect x="595" y="331" width="1" height="31" fill="#50d855"/>
<rect x="593" y="345" width="5" height="7" fill="#50d855"/>
<rect x="594" y="346" width="3" height="5" fill="#f2fff2"/>
<rect x="603" y="318" width="1" height="29" fill="#50d855"/>
<rect x="601" y="324" width="5" height="6" fill="#50d855"/>
<rect x="602" y="325" width="3" height="4" fill="#f2fff2"/>
<rect x="611" y="313" width="1" height="34" fill="#50d855"/>
<rect x="609" y="325" width="5" height="5" fill="#50d855"/>
<rect x="610" y="326" width="3" height="3" fill="#000"/>
<rect x="619" y="278" width="1" height="53" fill="#50d855"/>
<rect x="617" y="283" width="5" height="43" fill="#50d855"/>
<rect x="618" y="284" width="3" height="41" fill="#000"/>
<rect x="627" y="269" width="1" height="55" fill="#50d855"/>
<rect x="625" y="283" width="5" height="25" fill="#50d855"/>
<rect x="626" y="284" width="3" height="23" fill="#f2fff2"/>
<rect x="635" y="296" width="1" height="64" fill="#50d855"/>
<rect x="633" y="307" width="5" height="38" fill="#50d855"/>
<rect x="634" y="308" width="3" height="36" fill="#f2fff2"/>
<rect x="643" y="317" width="1" height="34" fill="#50d855"/>
<rect x="641" y="330" width="5" height="15" fill="#50d855"/>
<rect x="642" y="331" width="3" height="13" fill="#000"/>
<rect x="651" y="320" width="1" height="36" fill="#50d855"/>
<rect x="649" y="336" width="5" height="17" fill="#50d855"/>
<rect x="650" y="337" width="3" height="15" fill="#f2fff2"/>
<rect x="659" y="342" width="1" height="23" fill="#50d855"/>
<rect x="657" y="352" width="5" height="4" fill="#50d855"/>
<rect x="658" y="353" width="3" height="2" fill="#f2fff2"/>
<rect x="667" y="284" width="1" height="89" fill="#50d855"/>
<rect x="665" y="312" width="5" height="44" fill="#50d855"/>
<rect x="666" y="313" width="3" height="42" fill="#000"/>
<rect x="675" y="295" width="1" height="46" fill="#50d855"/>
<rect x="673" y="312" width="5" height="13" fill="#50d855"/>
<rect x="674" y="313" width="3" height="11" fill="#f2fff2"/>
<rect x="683" y="296" width="1" height="63" fill="#50d855"/>
<rect x="681" y="324" width="5" height="13" fill="#50d855"/>
<rect x="682" y="325" width="3" height="11" fill="#f2fff2"/>
<rect x="691" y="312" width="1" height="27" fill="#50d855"/>
<rect x="689" y="317" width="5" height="20" fill="#50d855"/>
<rect x="690" y="318" width="3" height="18" fill="#000"/>
<rect x="699" y="306" width="1" height="24" fill="#50d855"/>
<rect x="697" y="309" width="5" height="9" fill="#50d855"/>
<rect x="698" y="310" width="3" height="7" fill="#000"/>
<rect x="707" y="296" width="1" height="21" fill="#50d855"/>
<rect x="705" y="306" width="5" height="5" fill="#50d855"/>
<rect x="706" y="307" width="3" height="3" fill="#000"/>
<rect x="715" y="284" width="1" height="46" fill="#50d855"/>
<rect x="713" y="307" width="5" height="17" fill="#50d855"/>
<rect x="714" y="308" width="3" height="15" fill="#f2fff2"/>
<rect x="723" y="189" width="1" height="157" fill="#50d855"/>
<rect x="721" y="200" width="5" height="124" fill="#50d855"/>
<rect x="722" y="201" width="3" height="122" fill="#000"/>
<rect x="731" y="127" width="1" height="76" fill="#50d855"/>
<rect x="729" y="178" width="5" height="23" fill="#50d855"/>
<rect x="730" y="179" width="3" height="21" fill="#000"/>
<rect x="739" y="142" width="1" height="216" fill="#50d855"/>
<rect x="737" y="178" width="5" height="122" fill="#50d855"/>
<rect x="738" y="179" width="3" height="120" fill="#f2fff2"/>
<rect x="747" y="290" width="1" height="40" fill="#50d855"/>
<rect x="745" y="299" width="5" height="4" fill="#50d855"/>
<rect x="746" y="300" width="3" height="2" fill="#000"/>
<rect x="755" y="277" width="1" height="31" fill="#50d855"/>
<rect x="753" y="292" width="5" height="8" fill="#50d855"/>
<rect x="754" y="293" width="3" height="6" fill="#000"/>
<rect x="763" y="291" width="1" height="105" fill="#50d855"/>
<rect x="761" y="293" width="5" height="93" fill="#50d855"/>
<rect x="762" y="294" width="3" height="91" fill="#f2fff2"/>
<rect x="771" y="373" width="1" height="81" fill="#50d855"/>
<rect x="769" y="385" width="5" height="62" fill="#50d855"/>
<rect x="770" y="386" width="3" height="60" fill="#f2fff2"/>
<rect x="779" y="433" width="1" height="58" fill="#50d855"/>
<rect x="777" y="446" width="5" height="10" fill="#50d855"/>
<rect x="778" y="447" width="3" height="8" fill="#f2fff2"/>
<rect x="787" y="433" width="1" height="37" fill="#50d855"/>
<rect x="785" y="455" width="5" height="7" fill="#50d855"/>
<rect x="786" y="456" width="3" height="5" fill="#f2fff2"/>
<rect x="795" y="438" width="1" height="32" fill="#50d855"/>
<rect x="793" y="442" width="5" height="21" fill="#50d855"/>
<rect x="794" y="443" width="3" height="19" fill="#000"/>
<rect x="803" y="439" width="1" height="32" fill="#50d855"/>
<rect x="801" y="442" width="5" height="23" fill="#50d855"/>
<rect x="802" y="443" width="3" height="21" fill="#f2fff2"/>
<rect x="811" y="392" width="1" height="87" fill="#50d855"/>
<rect x="809" y="400" width="5" height="65" fill="#50d855"/>
<rect x="810" y="401" width="3" height="63" fill="#000"/>
<rect x="819" y="376" width="1" height="60" fill="#50d855"/>
<rect x="817" y="399" width="5" height="3" fill="#50d855"/>
<rect x="818" y="400" width="3" height="1" fill="#f2fff2"/>
<rect x="827" y="340" width="1" height="78" fill="#50d855"/>
<rect x="825" y="365" width="5" height="37" fill="#50d855"/>
<rect x="826" y="366" width="3" height="35" fill="#000"/>
<rect x="835" y="336" width="1" height="34" fill="#50d855"/>
<rect x="833" y="352" width="5" height="15" fill="#50d855"/>
<rect x="834" y="353" width="3" height="13" fill="#000"/>
<rect x="843" y="320" width="1" height="45" fill="#50d855"/>
<rect x="841" y="321" width="5" height="40" fill="#50d855"/>
<rect x="842" y="322" width="3" height="38" fill="#f2fff2"/>
<rect x="851" y="339" width="1" height="24" fill="#50d855"/>
<rect x="849" y="354" width="5" height="7" fill="#50d855"/>
<rect x="850" y="355" width="3" height="5" fill="#000"/>
<rect x="859" y="322" width="1" height="59" fill="#50d855"/>
<rect x="857" y="350" width="5" height="5" fill="#50d855"/>
<rect x="858" y="351" width="3" height="3" fill="#000"/>
<rect x="867" y="310" width="1" height="82" fill="#50d855"/>
<rect x="865" y="350" width="5" height="31" fill="#50d855"/>
<rect x="866" y="351" width="3" height="29" fill="#f2fff2"/>
<rect x="875" y="374" width="1" height="66" fill="#50d855"/>
<rect x="873" y="380" width="5" height="52" fill="#50d855"/>
<rect x="874" y="381" width="3" height="50" fill="#f2fff2"/>
<rect x="883" y="429" width="1" height="38" fill="#50d855"/>
<rect x="881" y="432" width="5" height="24" fill="#50d855"/>
<rect x="882" y="433" width="3" height="22" fill="#f2fff2"/>
<rect x="891" y="444" width="1" height="29" fill="#50d855"/>
<rect x="889" y="462" width="5" height="2" fill="#50d855"/>
<rect x="899" y="431" width="1" height="34" fill="#50d855"/>
<rect x="897" y="439" width="5" height="25" fill="#50d855"/>
<rect x="898" y="440" width="3" height="23" fill="#000"/>
<rect x="907" y="416" width="1" height="52" fill="#50d855"/>
<rect x="905" y="433" width="5" height="7" fill="#50d855"/>
<rect x="906" y="434" width="3" height="5" fill="#000"/>
<rect x="915" y="417" width="1" height="54" fill="#50d855"/>
<rect x="913" y="433" width="5" height="18" fill="#50d855"/>
<rect x="914" y="434" width="3" height="16" fill="#f2fff2"/>
<rect x="923" y="443" width="1" height="78" fill="#50d855"/>
<rect x="921" y="450" width="5" height="58" fill="#50d855"/>
<rect x="922" y="451" width="3" height="56" fill="#f2fff2"/>
<rect x="931" y="486" width="1" height="32" fill="#50d855"/>
<rect x="929" y="486" width="5" height="22" fill="#50d855"/>
<rect x="930" y="487" width="3" height="20" fill="#000"/>
<rect x="939" y="480" width="1" height="29" fill="#50d855"/>
<rect x="937" y="483" width="5" height="22" fill="#50d855"/>
<rect x="938" y="484" width="3" height="20" fill="#000"/>
<rect x="947" y="477" width="1" height="13" fill="#50d855"/>
<rect x="945" y="483" width="5" height="5" fill="#50d855"/>
<rect x="946" y="484" width="3" height="3" fill="#f2fff2"/>
<rect x="955" y="460" width="1" height="42" fill="#50d855"/>
<rect x="953" y="467" width="5" height="21" fill="#50d855"/>
<rect x="954" y="468" width="3" height="19" fill="#000"/>
<rect x="963" y="438" width="1" height="42" fill="#50d855"/>
<rect x="961" y="455" width="5" height="13" fill="#50d855"/>
<rect x="962" y="456" width="3" height="11" fill="#000"/>
<rect x="971" y="452" width="1" height="45" fill="#50d855"/>
<rect x="969" y="455" width="5" height="3" fill="#50d855"/>
<rect x="979" y="409" width="1" height="55" fill="#50d855"/>
<rect x="977" y="409" width="5" height="49" fill="#50d855"/>
<rect x="978" y="410" width="3" height="47" fill="#000"/>
<rect x="987" y="404" width="1" height="68" fill="#50d855"/>
<rect x="985" y="411" width="5" height="11" fill="#50d855"/>
<rect x="986" y="412" width="3" height="9" fill="#f2fff2"/>
<rect x="995" y="403" width="1" height="22" fill="#50d855"/>
<rect x="993" y="404" width="5" height="19" fill="#50d855"/>
<rect x="994" y="405" width="3" height="17" fill="#000"/>
<rect x="1003" y="386" width="1" height="57" fill="#50d855"/>
<rect x="1001" y="405" width="5" height="7" fill="#50d855"/>
<rect x="1002" y="406" width="3" height="5" fill="#f2fff2"/>
<rect x="1011" y="397" width="1" height="41" fill="#50d855"/>
<rect x="1009" y="411" width="5" height="16" fill="#50d855"/>
<rect x="1010" y="412" width="3" height="14" fill="#f2fff2"/>
<rect x="1019" y="420" width="1" height="43" fill="#50d855"/>
<rect x="1017" y="427" width="5" height="24" fill="#50d855"/>
<rect x="1018" y="428" width="3" height="22" fill="#f2fff2"/>
<rect x="10" y="104" width="1285" height="1" fill="#fff"/>
<rect x="10" y="552" width="1285" height="1" fill="#fff"/>
<rect x="10" y="104" width="1" height="449" fill="#fff"/>
<rect x="1294" y="104" width="1" height="449" fill="#fff"/>
<rect x="10" y="345" width="4" height="46" fill="#50d855"/>
<rect x="10" y="346" width="3" height="44" fill="#f2fff2"/>
<rect x="9" y="345" width="1" height="46" fill="#000"/>
<rect x="1295" y="119" width="2" height="1" fill="#fff"/>
<rect x="1295" y="152" width="2" height="1" fill="#fff"/>
<rect x="1295" y="185" width="2" height="1" fill="#fff"/>
<rect x="1295" y="218" width="2" height="1" fill="#fff"/>
<rect x="1295" y="251" width="2" height="1" fill="#fff"/>
<rect x="1295" y="284" width="2" height="1" fill="#fff"/>
<rect x="1295" y="317" width="2" height="1" fill="#fff"/>
<rect x="1295" y="350" width="2" height="1" fill="#fff"/>
<rect x="1295" y="383" width="2" height="1" fill="#fff"/>
<rect x="1295" y="416" width="2" height="1" fill="#fff"/>
<rect x="1295" y="449" width="2" height="1" fill="#fff"/>
<rect x="1295" y="483" width="2" height="1" fill="#fff"/>
<rect x="1295" y="516" width="2" height="1" fill="#fff"/>
<rect x="1295" y="549" width="2" height="1" fill="#fff"/>
<rect x="11" y="553" width="1" height="3" fill="#fff"/>
<rect x="75" y="553" width="1" height="3" fill="#fff"/>
<rect x="139" y="553" width="1" height="3" fill="#fff"/>
<rect x="203" y="553" width="1" height="3" fill="#fff"/>
<rect x="267" y="553" width="1" height="3" fill="#fff"/>
<rect x="331" y="553" width="1" height="3" fill="#fff"/>
<rect x="395" y="553" width="1" height="3" fill="#fff"/>
<rect x="459" y="553" width="1" height="3" fill="#fff"/>
<rect x="523" y="553" width="1" height="3" fill="#fff"/>
<rect x="587" y="553" width="1" height="3" fill="#fff"/>
<rect x="651" y="553" width="1" height="3" fill="#fff"/>
<rect x="715" y="553" width="1" height="3" fill="#fff"/>
<rect x="779" y="553" width="1" height="3" fill="#fff"/>
<rect x="843" y="553" width="1" height="3" fill="#fff"/>
<rect x="907" y="553" width="1" height="3" fill="#fff"/>
<rect x="971" y="553" width="1" height="3" fill="#fff"/>
<rect x="1297" y="446" width="39" height="11" fill="#fff"/>
</g>
<path d="M1031 105h9.500l-4.750 4.800z" fill="#a3adb8"/>
<path d="M14 110.5h7l-3.5 4.5z" fill="#fff"/>
<text x="25.1" y="116" font-size="10" fill="#fff" textLength="201.9" lengthAdjust="spacing">EURUSD,H4  1.11603 1.11633 1.11447 1.11491</text>
<text x="1300.1" y="123" font-size="10" fill="#fff" textLength="32.9" lengthAdjust="spacing">1.12990</text>
<text x="1300.1" y="156" font-size="10" fill="#fff" textLength="32.9" lengthAdjust="spacing">1.12840</text>
<text x="1300.1" y="189" font-size="10" fill="#fff" textLength="32.9" lengthAdjust="spacing">1.12690</text>
<text x="1300.1" y="222" font-size="10" fill="#fff" textLength="32.9" lengthAdjust="spacing">1.12545</text>
<text x="1300.1" y="255" font-size="10" fill="#fff" textLength="32.9" lengthAdjust="spacing">1.12395</text>
<text x="1300.1" y="288" font-size="10" fill="#fff" textLength="32.9" lengthAdjust="spacing">1.12245</text>
<text x="1300.1" y="321" font-size="10" fill="#fff" textLength="32.9" lengthAdjust="spacing">1.12095</text>
<text x="1300.1" y="354" font-size="10" fill="#fff" textLength="32.9" lengthAdjust="spacing">1.11950</text>
<text x="1300.1" y="387" font-size="10" fill="#fff" textLength="32.9" lengthAdjust="spacing">1.11800</text>
<text x="1300.1" y="420" font-size="10" fill="#fff" textLength="32.9" lengthAdjust="spacing">1.11650</text>
<text x="1300.1" y="487" font-size="10" fill="#fff" textLength="32.9" lengthAdjust="spacing">1.11350</text>
<text x="1300.1" y="520" font-size="10" fill="#fff" textLength="32.9" lengthAdjust="spacing">1.11200</text>
<text x="1300.1" y="553" font-size="10" fill="#fff" textLength="32.9" lengthAdjust="spacing">1.11050</text>
<text x="1300.1" y="455" font-size="10" fill="#000" textLength="32.9" lengthAdjust="spacing">1.11491</text>
<text x="9.6" y="565" font-size="10" fill="#fff" textLength="55.4" lengthAdjust="spacing">24 May 2017</text>
<text x="74.3" y="565" font-size="10" fill="#fff" textLength="58.4" lengthAdjust="spacing">26 May 00:00</text>
<text x="138.3" y="565" font-size="10" fill="#fff" textLength="58.4" lengthAdjust="spacing">29 May 08:00</text>
<text x="202.3" y="565" font-size="10" fill="#fff" textLength="58.4" lengthAdjust="spacing">30 May 16:00</text>
<text x="266.3" y="565" font-size="10" fill="#fff" textLength="47.4" lengthAdjust="spacing">1 Jun 00:00</text>
<text x="330.3" y="565" font-size="10" fill="#fff" textLength="47.4" lengthAdjust="spacing">2 Jun 08:00</text>
<text x="394.3" y="565" font-size="10" fill="#fff" textLength="47.4" lengthAdjust="spacing">5 Jun 16:00</text>
<text x="458.3" y="565" font-size="10" fill="#fff" textLength="47.4" lengthAdjust="spacing">7 Jun 00:00</text>
<text x="522.3" y="565" font-size="10" fill="#fff" textLength="47.4" lengthAdjust="spacing">8 Jun 08:00</text>
<text x="586.3" y="565" font-size="10" fill="#fff" textLength="47.4" lengthAdjust="spacing">9 Jun 16:00</text>
<text x="650.3" y="565" font-size="10" fill="#fff" textLength="52.4" lengthAdjust="spacing">13 Jun 00:00</text>
<text x="714.3" y="565" font-size="10" fill="#fff" textLength="52.4" lengthAdjust="spacing">14 Jun 08:00</text>
<text x="778.3" y="565" font-size="10" fill="#fff" textLength="52.4" lengthAdjust="spacing">15 Jun 16:00</text>
<text x="842.3" y="565" font-size="10" fill="#fff" textLength="52.4" lengthAdjust="spacing">19 Jun 00:00</text>
<text x="906.3" y="565" font-size="10" fill="#fff" textLength="52.4" lengthAdjust="spacing">20 Jun 08:00</text>
<text x="970.3" y="565" font-size="10" fill="#fff" textLength="52.4" lengthAdjust="spacing">21 Jun 16:00</text>
<g class="c">
<rect x="7" y="592" width="14" height="231" fill="#0a246a"/>
<rect x="22" y="578" width="1314" height="226" fill="#fff"/>
<rect x="21" y="578" width="1" height="226" fill="#808080"/>
<rect x="22" y="803" width="1314" height="1" fill="#000"/>
<rect x="22" y="578" width="1313" height="18" fill="#d4d0c8"/>
<rect x="22" y="578" width="1314" height="1" fill="#808080"/>
<rect x="22" y="594" width="1314" height="1" fill="#808080"/>
<rect x="22" y="595" width="1314" height="1" fill="#404040"/>
<rect x="23" y="579" width="1" height="15" fill="#ffffff"/>
<rect x="23" y="579" width="127" height="1" fill="#ffffff"/>
<rect x="150" y="579" width="1" height="16" fill="#808080"/>
<rect x="151" y="579" width="1" height="17" fill="#404040"/>
<rect x="152" y="579" width="1" height="15" fill="#ffffff"/>
<rect x="152" y="579" width="178" height="1" fill="#ffffff"/>
<rect x="330" y="579" width="1" height="16" fill="#808080"/>
<rect x="331" y="579" width="1" height="17" fill="#404040"/>
<rect x="332" y="579" width="1" height="15" fill="#ffffff"/>
<rect x="332" y="579" width="88" height="1" fill="#ffffff"/>
<rect x="420" y="579" width="1" height="16" fill="#808080"/>
<rect x="421" y="579" width="1" height="17" fill="#404040"/>
<rect x="422" y="579" width="1" height="15" fill="#ffffff"/>
<rect x="422" y="579" width="68" height="1" fill="#ffffff"/>
<rect x="490" y="579" width="1" height="16" fill="#808080"/>
<rect x="491" y="579" width="1" height="17" fill="#404040"/>
<rect x="492" y="579" width="1" height="15" fill="#ffffff"/>
<rect x="492" y="579" width="88" height="1" fill="#ffffff"/>
<rect x="580" y="579" width="1" height="16" fill="#808080"/>
<rect x="581" y="579" width="1" height="17" fill="#404040"/>
<rect x="582" y="579" width="1" height="15" fill="#ffffff"/>
<rect x="582" y="579" width="98" height="1" fill="#ffffff"/>
<rect x="680" y="579" width="1" height="16" fill="#808080"/>
<rect x="681" y="579" width="1" height="17" fill="#404040"/>
<rect x="682" y="579" width="1" height="15" fill="#ffffff"/>
<rect x="682" y="579" width="98" height="1" fill="#ffffff"/>
<rect x="780" y="579" width="1" height="16" fill="#808080"/>
<rect x="781" y="579" width="1" height="17" fill="#404040"/>
<rect x="782" y="579" width="1" height="15" fill="#ffffff"/>
<rect x="782" y="579" width="98" height="1" fill="#ffffff"/>
<rect x="880" y="579" width="1" height="16" fill="#808080"/>
<rect x="881" y="579" width="1" height="17" fill="#404040"/>
<rect x="882" y="579" width="1" height="15" fill="#ffffff"/>
<rect x="882" y="579" width="98" height="1" fill="#ffffff"/>
<rect x="980" y="579" width="1" height="16" fill="#808080"/>
<rect x="981" y="579" width="1" height="17" fill="#404040"/>
<rect x="982" y="579" width="1" height="15" fill="#ffffff"/>
<rect x="982" y="579" width="98" height="1" fill="#ffffff"/>
<rect x="1080" y="579" width="1" height="16" fill="#808080"/>
<rect x="1081" y="579" width="1" height="17" fill="#404040"/>
<rect x="1082" y="579" width="1" height="15" fill="#ffffff"/>
<rect x="1082" y="579" width="98" height="1" fill="#ffffff"/>
<rect x="1180" y="579" width="1" height="16" fill="#808080"/>
<rect x="1181" y="579" width="1" height="17" fill="#404040"/>
<rect x="1182" y="579" width="1" height="15" fill="#ffffff"/>
<rect x="1182" y="579" width="151" height="1" fill="#ffffff"/>
<rect x="1333" y="579" width="1" height="16" fill="#808080"/>
<rect x="1334" y="579" width="1" height="17" fill="#404040"/>
<rect x="22" y="596" width="1314" height="20" fill="#d0cfd6"/>
</g>
<text x="27.3" y="591.5" font-size="11" fill="#000" textLength="34.0" lengthAdjust="spacing">Ордер</text>
<text x="294.6" y="591.5" font-size="11" fill="#000" textLength="31.4" lengthAdjust="spacing">Время</text>
<text x="396.9" y="591.5" font-size="11" fill="#000" textLength="19.1" lengthAdjust="spacing">Тип</text>
<text x="452.3" y="591.5" font-size="11" fill="#000" textLength="33.7" lengthAdjust="spacing">Объем</text>
<text x="537.9" y="591.5" font-size="11" fill="#000" textLength="38.1" lengthAdjust="spacing">Символ</text>
<text x="648.9" y="591.5" font-size="11" fill="#000" textLength="26.4" lengthAdjust="spacing">Цена</text>
<text x="753.9" y="591.5" font-size="11" fill="#000" textLength="21.4" lengthAdjust="spacing">S / L</text>
<text x="852.9" y="591.5" font-size="11" fill="#000" textLength="23.1" lengthAdjust="spacing">T / P</text>
<text x="948.9" y="591.5" font-size="11" fill="#000" textLength="27.1" lengthAdjust="spacing">Цена</text>
<text x="1027.9" y="591.5" font-size="11" fill="#000" textLength="48.1" lengthAdjust="spacing">Комиссия</text>
<text x="1150.3" y="591.5" font-size="11" fill="#000" textLength="25.7" lengthAdjust="spacing">Своп</text>
<text x="1282.9" y="591.5" font-size="11" fill="#000" textLength="45.8" lengthAdjust="spacing">Прибыль</text>
<path d="M73.5 590.5l4-6.5 4 6.500z" fill="#fff"/>
<circle cx="31.900" cy="606.200" r="1.900" fill="#4a4a4a"/><path d="M29 603a4.500 4.500 0 0 0 0 6.400M34.800 603a4.500 4.500 0 0 1 0 6.400M26.600 601.800a7 7 0 0 0 0 8.900M37.200 601.800a7 7 0 0 1 0 8.900" stroke="#8a8a8a" stroke-width="1.100" fill="none"/>
<text x="42.9" y="610" font-size="11" fill="#000" font-weight="bold" textLength="128.8" lengthAdjust="spacing">Баланс: 50 218.40 USD</text>
<text x="177.3" y="610" font-size="11" fill="#000" font-weight="bold" textLength="118.7" lengthAdjust="spacing">Средства: 50 218.40</text>
<text x="301.3" y="610" font-size="11" fill="#000" font-weight="bold" textLength="169.7" lengthAdjust="spacing">Свободная маржа: 50 218.40</text>
<text x="1306.6" y="610" font-size="11" fill="#000" font-weight="bold" textLength="24.1" lengthAdjust="spacing">0.00</text>
<path d="M10.500 581l5 5M15.500 581l-5 5" stroke="#000" stroke-width="1.700" fill="none"/>
<text transform="translate(17.5,820) rotate(-90)" font-size="11" fill="#fff" textLength="50" lengthAdjust="spacing">Терминал</text>
<g class="c">
<rect x="24" y="803" width="67" height="17" fill="#fff"/>
<rect x="24" y="803" width="1" height="18" fill="#000"/>
<rect x="24" y="820" width="68" height="1" fill="#000"/>
<rect x="25" y="819" width="67" height="1" fill="#000"/>
<rect x="90" y="803" width="1" height="18" fill="#000"/>
<rect x="91" y="803" width="1" height="18" fill="#000"/>
<rect x="150" y="808" width="1" height="11" fill="#404040"/>
<rect x="246" y="808" width="1" height="11" fill="#404040"/>
<rect x="320" y="808" width="1" height="11" fill="#404040"/>
<rect x="379" y="808" width="1" height="11" fill="#404040"/>
<rect x="442" y="808" width="1" height="11" fill="#404040"/>
<rect x="500" y="808" width="1" height="11" fill="#404040"/>
<rect x="564" y="808" width="1" height="11" fill="#404040"/>
<rect x="644" y="808" width="1" height="11" fill="#404040"/>
<rect x="714" y="808" width="1" height="11" fill="#404040"/>
<rect x="774" y="808" width="1" height="11" fill="#404040"/>
</g>
<text x="33.6" y="816" font-size="11" fill="#000" textLength="47.7" lengthAdjust="spacing">Торговля</text>
<text x="100.1" y="816" font-size="11" fill="#404040" textLength="39.9" lengthAdjust="spacing">Активы</text>
<text x="158.9" y="816" font-size="11" fill="#404040" textLength="77.1" lengthAdjust="spacing">История Счета</text>
<text x="254.6" y="816" font-size="11" fill="#404040" textLength="43.1" lengthAdjust="spacing">Новости</text>
<text x="328.9" y="816" font-size="11" fill="#404040" textLength="40.4" lengthAdjust="spacing">Алерты</text>
<text x="387.3" y="816" font-size="11" fill="#404040" textLength="32.7" lengthAdjust="spacing">Почта</text>
<text x="450.6" y="816" font-size="11" fill="#404040" textLength="39.4" lengthAdjust="spacing">Маркет</text>
<text x="508.9" y="816" font-size="11" fill="#404040" textLength="45.4" lengthAdjust="spacing">Сигналы</text>
<text x="572.3" y="816" font-size="11" fill="#404040" textLength="62.0" lengthAdjust="spacing">Библиотека</text>
<text x="652.9" y="816" font-size="11" fill="#404040" textLength="51.4" lengthAdjust="spacing">Эксперты</text>
<text x="722.9" y="816" font-size="11" fill="#404040" textLength="41.4" lengthAdjust="spacing">Журнал</text>
<text x="299.5" y="818.8" font-size="9.5" fill="#d81e1e" font-weight="bold">99</text>
<text x="421.9" y="818.8" font-size="9.5" fill="#d81e1e" font-weight="bold">12</text>
<g class="c">
<rect x="4" y="826" width="1337" height="1" fill="#808080"/>
<rect x="4" y="827" width="1337" height="1" fill="#ffffff"/>
<rect x="641" y="831" width="1" height="18" fill="#808080"/>
<rect x="642" y="831" width="1" height="18" fill="#ffffff"/>
<rect x="750" y="831" width="1" height="18" fill="#808080"/>
<rect x="751" y="831" width="1" height="18" fill="#ffffff"/>
<rect x="851" y="831" width="1" height="18" fill="#808080"/>
<rect x="852" y="831" width="1" height="18" fill="#ffffff"/>
<rect x="923" y="831" width="1" height="18" fill="#808080"/>
<rect x="924" y="831" width="1" height="18" fill="#ffffff"/>
<rect x="994" y="831" width="1" height="18" fill="#808080"/>
<rect x="995" y="831" width="1" height="18" fill="#ffffff"/>
<rect x="1063" y="831" width="1" height="18" fill="#808080"/>
<rect x="1064" y="831" width="1" height="18" fill="#ffffff"/>
<rect x="1134" y="831" width="1" height="18" fill="#808080"/>
<rect x="1135" y="831" width="1" height="18" fill="#ffffff"/>
<rect x="1200" y="831" width="1" height="18" fill="#808080"/>
<rect x="1201" y="831" width="1" height="18" fill="#ffffff"/>
<rect x="1206" y="833" width="2" height="12" fill="#7fa030"/>
<rect x="1209" y="833" width="2" height="12" fill="#7fa030"/>
<rect x="1212" y="833" width="2" height="12" fill="#7fa030"/>
<rect x="1215" y="833" width="2" height="12" fill="#7fa030"/>
<rect x="1218" y="833" width="2" height="12" fill="#7fa030"/>
<rect x="1221" y="833" width="2" height="12" fill="#7fa030"/>
<rect x="1224" y="833" width="2" height="12" fill="#7fa030"/>
<rect x="1227" y="833" width="2" height="12" fill="#7fa030"/>
<rect x="1206" y="842" width="2" height="3" fill="#1f4f8f"/>
<rect x="1209" y="841" width="2" height="4" fill="#1f4f8f"/>
<rect x="1212" y="840" width="2" height="5" fill="#1f4f8f"/>
<rect x="1215" y="839" width="2" height="6" fill="#1f4f8f"/>
<rect x="1218" y="838" width="2" height="7" fill="#1f4f8f"/>
<rect x="1221" y="837" width="2" height="8" fill="#1f4f8f"/>
<rect x="1224" y="836" width="2" height="9" fill="#1f4f8f"/>
<rect x="1227" y="835" width="2" height="10" fill="#1f4f8f"/>
</g>
<text x="7.6" y="843.5" font-size="11" fill="#000" textLength="165.4" lengthAdjust="spacing">Для вызова справки нажмите F1</text>
<text x="645.6" y="843.5" font-size="11" fill="#000" textLength="36.1" lengthAdjust="spacing">Default</text>
<text x="1231.9" y="843.5" font-size="11" fill="#000" textLength="66.8" lengthAdjust="spacing">78707/245 kb</text>
<g class="c">
<path d="M1339 851L1339 851" stroke="none"/>
<path d="M1335 851L1339 847" stroke="none"/>
<path d="M1331 851L1339 843" stroke="none"/>
</g>
<path d="M1337 851.5L1340.5 848" stroke="#808080" stroke-width="1.4"/><path d="M1336 851.5L1340.5 847" stroke="#fff" stroke-width="1"/>
<path d="M1333 851.5L1340.5 844" stroke="#808080" stroke-width="1.4"/><path d="M1332 851.5L1340.5 843" stroke="#fff" stroke-width="1"/>
<path d="M1329 851.5L1340.5 840" stroke="#808080" stroke-width="1.4"/><path d="M1328 851.5L1340.5 839" stroke="#fff" stroke-width="1"/>
</svg>
</body></html>
